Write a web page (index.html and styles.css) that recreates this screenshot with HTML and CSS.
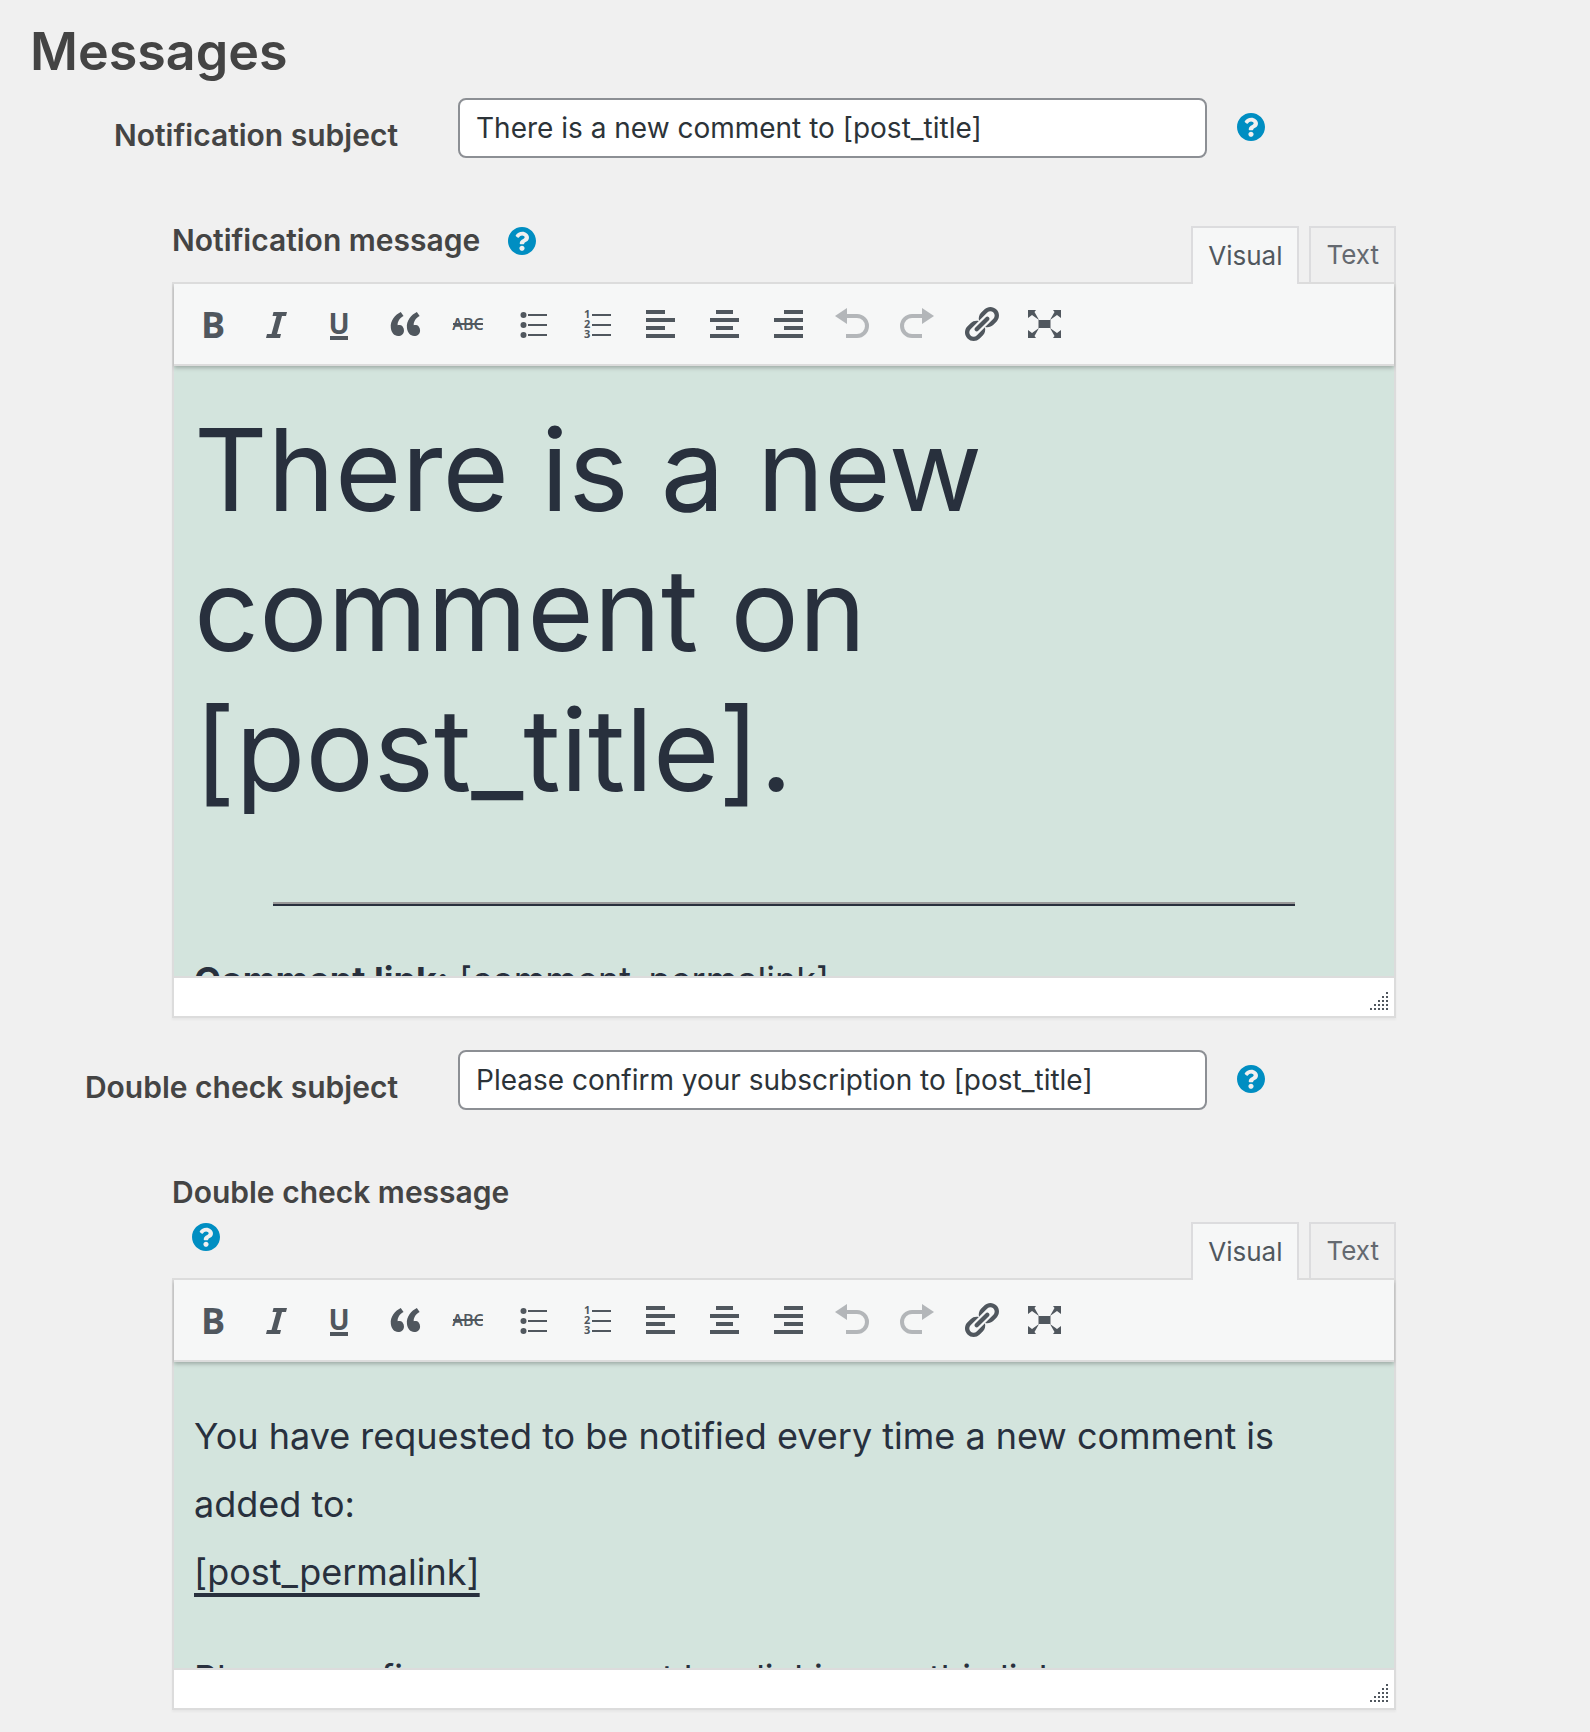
FILE: index.html
```html
<!DOCTYPE html>
<html lang="en">
<head>
    <meta charset="UTF-8">
    <meta name="viewport" content="width=device-width, initial-scale=1.0">
    <title>Messages</title>
    <link rel="stylesheet" href="styles.css">
</head>
<body>
    <!-- icon sprite -->
    <svg class="sprite" aria-hidden="true">
        <symbol id="i-help" viewBox="8 8 496 496"><path d="M504 256c0 136.997-111.043 248-248 248S8 392.997 8 256C8 119.083 119.043 8 256 8s248 111.083 248 248zM262.655 90c-54.497 0-89.255 22.957-116.549 63.758-3.536 5.286-2.353 12.415 2.715 16.258l34.699 26.31c5.205 3.947 12.621 3.008 16.665-2.122 17.864-22.658 30.113-35.797 57.303-35.797 20.429 0 45.698 13.148 45.698 32.958 0 14.976-12.363 22.667-32.534 33.976C247.128 238.528 216 254.941 216 296v4c0 6.627 5.373 12 12 12h56c6.627 0 12-5.373 12-12v-1.333c0-28.462 83.186-29.647 83.186-106.667 0-58.002-60.165-102-116.531-102zM256 338c-25.365 0-46 20.635-46 46 0 25.364 20.635 46 46 46s46-20.636 46-46c0-25.364-20.635-46-46-46z"/></symbol>
        <symbol id="i-bold" viewBox="0 0 40 40"><text class="t-bold" x="8" y="34">B</text></symbol>
        <symbol id="i-italic" viewBox="0 0 40 40"><path d="M16.5 8H30l-1 4h-4l-5 18h4l-1 4H9l1-4h4.500l5-18h-4z"/></symbol>
        <symbol id="i-underline" viewBox="0 0 40 40"><text class="t-under" x="18" y="30">U</text><path d="M9 32h18v4H9z"/></symbol>
        <symbol id="i-quote" viewBox="0 0 20 20"><path d="M9.490 13.220c0-.74-.2-1.380-.61-1.900-.62-.78-1.830-.88-2.530-.72-.29-1.650 1.110-3.750 2.920-4.650L7.880 4c-2.730 1.300-5.420 4.280-4.960 8.050C3.210 14.430 4.590 16 6.540 16c.85 0 1.560-.25 2.120-.75s.83-1.180.83-2.030zm8.050 0c0-.74-.2-1.380-.61-1.900-.63-.78-1.830-.88-2.530-.72-.29-1.650 1.110-3.750 2.920-4.650L15.930 4c-2.730 1.300-5.410 4.280-4.950 8.050.29 2.380 1.660 3.950 3.610 3.950.85 0 1.560-.25 2.120-.75s.83-1.180.83-2.030z"/></symbol>
        <symbol id="i-strike" viewBox="0 0 40 40"><text class="t-abc" x="19" y="26">ABC</text><path d="M4 19h30v2H4z"/></symbol>
        <symbol id="i-ul" viewBox="0 0 40 40"><circle cx="10.500" cy="11" r="3"/><circle cx="10.500" cy="21" r="3"/><circle cx="10.500" cy="31" r="3"/><path d="M15 10h19v2H15zM15 20h19v2H15zM15 30h19v2H15z"/></symbol>
        <symbol id="i-ol" viewBox="0 0 40 40"><text class="t-num" x="7" y="14">1</text><text class="t-num" x="7" y="24">2</text><text class="t-num" x="7" y="34">3</text><path d="M15 10h19v2H15zM15 20h19v2H15zM15 30h19v2H15z"/></symbol>
        <symbol id="i-left" viewBox="0 0 40 40"><path d="M5 6h19v4H5zM5 14h29v4H5zM5 22h19v4H5zM5 30h29v4H5z"/></symbol>
        <symbol id="i-center" viewBox="0 0 40 40"><path d="M11 6h17v4H11zM5 14h29v4H5zM11 22h17v4H11zM5 30h29v4H5z"/></symbol>
        <symbol id="i-right" viewBox="0 0 40 40"><path d="M15 6h19v4H15zM5 14h29v4H5zM15 22h19v4H15zM5 30h29v4H5z"/></symbol>
        <symbol id="i-undo" viewBox="0 0 40 40"><path d="M2 12L14 4v16z"/><path class="line" d="M13 12h11a10 10 0 0 1 0 20H13"/></symbol>
        <symbol id="i-redo" viewBox="0 0 40 40"><path d="M37 12L25 4v16z"/><path class="line" d="M26 12H15a10 10 0 0 0 0 20h10"/></symbol>
        <symbol id="i-link" viewBox="0 0 20 20"><path d="M17.740 2.760c1.680 1.690 1.680 4.410 0 6.100l-1.530 1.520c-1.120 1.120-2.700 1.470-4.140 1.090l2.620-2.610.76-.77.76-.76c.84-.84.84-2.200 0-3.040-.84-.85-2.200-.85-3.040 0l-.77.76-3.380 3.380c-.37-1.440-.02-3.020 1.100-4.140l1.520-1.530c1.690-1.680 4.420-1.680 6.100 0zM8.590 13.430l5.340-5.340c.42-.42.42-1.100 0-1.520-.44-.43-1.130-.39-1.530 0l-5.330 5.340c-.42.42-.42 1.100 0 1.520.44.43 1.130.39 1.520 0zm-.76 2.290l4.140-4.150c.38 1.440.03 3.020-1.090 4.140l-1.520 1.530c-1.690 1.680-4.410 1.680-6.100 0-1.680-1.680-1.680-4.420 0-6.100l1.530-1.520c1.120-1.120 2.700-1.470 4.140-1.100l-4.140 4.150c-.85.84-.85 2.200 0 3.050.84.84 2.200.84 3.040 0z"/></symbol>
        <symbol id="i-full" viewBox="0 0 40 40"><path d="M13.500 16h12v8h-12zM3 6h8L9.500 8l4.500 8-7-5-4 3zM36 6h-8l1.500 2-4.500 8 7-5 4 3zM3 34h8l-1.500-2 4.500-8-7 5-4-3zM36 34h-8l1.500-2-4.500-8 7 5 4-3z"/></symbol>
        <symbol id="i-grip" viewBox="0 0 20 20"><path d="M17 1h2v2h-2zM13 5h2v2h-2zM17 5h2v2h-2zM9 9h2v2H9zM13 9h2v2h-2zM17 9h2v2h-2zM5 13h2v2H5zM9 13h2v2H9zM13 13h2v2h-2zM17 13h2v2h-2zM1 17h2v2H1zM5 17h2v2H5zM9 17h2v2H9zM13 17h2v2h-2zM17 17h2v2h-2z"/></symbol>
    </svg>

    <h1 class="title">Messages</h1>

    <form>
        <div class="row">
            <label class="row-label" for="notification-subject">Notification subject</label>
            <input class="row-input" id="notification-subject" type="text" value="There is a new comment to [post_title]">
            <button class="help row-help" type="button" aria-label="Help"><svg><use href="#i-help"/></svg></button>
        </div>

        <section class="editor">
            <div class="editor-head">
                <div class="editor-label"><span id="notification-label">Notification message</span> <button class="help" type="button" aria-label="Help"><svg><use href="#i-help"/></svg></button></div>
                <div class="tabs"><button class="tab active" type="button">Visual</button><button class="tab" type="button">Text</button></div>
            </div>
            <div class="editor-box">
                <div class="toolbar">
                    <button class="tool" type="button" aria-label="Bold"><svg><use href="#i-bold"/></svg></button>
                    <button class="tool" type="button" aria-label="Italic"><svg><use href="#i-italic"/></svg></button>
                    <button class="tool" type="button" aria-label="Underline"><svg><use href="#i-underline"/></svg></button>
                    <button class="tool" type="button" aria-label="Blockquote"><svg><use href="#i-quote"/></svg></button>
                    <button class="tool" type="button" aria-label="Strikethrough"><svg><use href="#i-strike"/></svg></button>
                    <button class="tool" type="button" aria-label="Bulleted list"><svg><use href="#i-ul"/></svg></button>
                    <button class="tool" type="button" aria-label="Numbered list"><svg><use href="#i-ol"/></svg></button>
                    <button class="tool" type="button" aria-label="Align left"><svg><use href="#i-left"/></svg></button>
                    <button class="tool" type="button" aria-label="Align center"><svg><use href="#i-center"/></svg></button>
                    <button class="tool" type="button" aria-label="Align right"><svg><use href="#i-right"/></svg></button>
                    <button class="tool" type="button" aria-label="Undo" disabled><svg><use href="#i-undo"/></svg></button>
                    <button class="tool" type="button" aria-label="Redo" disabled><svg><use href="#i-redo"/></svg></button>
                    <button class="tool" type="button" aria-label="Insert link"><svg><use href="#i-link"/></svg></button>
                    <button class="tool" type="button" aria-label="Fullscreen"><svg><use href="#i-full"/></svg></button>
                </div>
                <div class="content content-tall" contenteditable="true" role="textbox" aria-multiline="true" aria-labelledby="notification-label" spellcheck="false">
                    <h2>There is a new comment on [post_title].</h2>
                    <hr>
                    <p><strong>Comment link:</strong> [comment_permalink]</p>
                </div>
                <div class="statusbar"><svg><use href="#i-grip"/></svg></div>
            </div>
        </section>

        <div class="row">
            <label class="row-label" for="double-check-subject">Double check subject</label>
            <input class="row-input" id="double-check-subject" type="text" value="Please confirm your subscription to [post_title]">
            <button class="help row-help" type="button" aria-label="Help"><svg><use href="#i-help"/></svg></button>
        </div>

        <section class="editor">
            <div class="editor-head">
                <div class="editor-label"><span id="double-check-label">Double check message</span> <button class="help" type="button" aria-label="Help"><svg><use href="#i-help"/></svg></button></div>
                <div class="tabs"><button class="tab active" type="button">Visual</button><button class="tab" type="button">Text</button></div>
            </div>
            <div class="editor-box">
                <div class="toolbar">
                    <button class="tool" type="button" aria-label="Bold"><svg><use href="#i-bold"/></svg></button>
                    <button class="tool" type="button" aria-label="Italic"><svg><use href="#i-italic"/></svg></button>
                    <button class="tool" type="button" aria-label="Underline"><svg><use href="#i-underline"/></svg></button>
                    <button class="tool" type="button" aria-label="Blockquote"><svg><use href="#i-quote"/></svg></button>
                    <button class="tool" type="button" aria-label="Strikethrough"><svg><use href="#i-strike"/></svg></button>
                    <button class="tool" type="button" aria-label="Bulleted list"><svg><use href="#i-ul"/></svg></button>
                    <button class="tool" type="button" aria-label="Numbered list"><svg><use href="#i-ol"/></svg></button>
                    <button class="tool" type="button" aria-label="Align left"><svg><use href="#i-left"/></svg></button>
                    <button class="tool" type="button" aria-label="Align center"><svg><use href="#i-center"/></svg></button>
                    <button class="tool" type="button" aria-label="Align right"><svg><use href="#i-right"/></svg></button>
                    <button class="tool" type="button" aria-label="Undo" disabled><svg><use href="#i-undo"/></svg></button>
                    <button class="tool" type="button" aria-label="Redo" disabled><svg><use href="#i-redo"/></svg></button>
                    <button class="tool" type="button" aria-label="Insert link"><svg><use href="#i-link"/></svg></button>
                    <button class="tool" type="button" aria-label="Fullscreen"><svg><use href="#i-full"/></svg></button>
                </div>
                <div class="content content-short" contenteditable="true" role="textbox" aria-multiline="true" aria-labelledby="double-check-label" spellcheck="false">
                    <p>You have requested to be notified every time a new comment is added to:<br><a href="#">[post_permalink]</a></p>
                    <p>Please confirm your request by clicking on this link:</p>
                </div>
                <div class="statusbar"><svg><use href="#i-grip"/></svg></div>
            </div>
        </section>
    </form>
</body>
</html>
```

FILE: styles.css
```css
*{margin:0;padding:0;box-sizing:border-box}
body{background:#f0f0f0;color:#444;font-family:Inter,"Liberation Sans",sans-serif;font-size:28px;line-height:44px;padding-bottom:20px}
button,input{font:inherit;color:inherit}
button{background:none;border:none;cursor:pointer}
svg{display:block;fill:currentColor}
.sprite{display:none}

.title{font-size:52px;line-height:64px;font-weight:600;padding:20px 30px 14px}

/* subject rows */
.row{display:flex;align-items:flex-start;padding-right:325px;margin-bottom:60px}
.row-label{width:398px;margin-right:60px;padding-top:15px;text-align:right;font-size:30px;font-weight:600}
.row-input{flex:1;min-width:0;height:60px;padding:0 16px;background:#fff;border:2px solid #8c8f94;border-radius:8px;color:#2c3338}
.help{display:inline-block;width:28px;height:28px;margin:0 0 4px 20px;vertical-align:middle;color:#008ec2}
.help svg{width:28px;height:28px}
.row-help{margin:15px 0 0 30px}

/* editors */
.editor{margin:0 194px 32px 172px}
.editor-head{display:flex;justify-content:space-between;align-items:flex-end}
.editor-label{width:370px;padding-bottom:20px;font-size:30px;font-weight:600}
.tabs{display:flex;gap:10px}
.tab{height:56px;padding:0 15px;border:2px solid #dcdcde;border-bottom:none;background:#efefef;color:#646970;font-size:26px}
.tab.active{position:relative;height:58px;margin-bottom:-2px;background:#f6f7f7;color:#50575e;z-index:1}
.editor-box{border:2px solid #dcdcdc;box-shadow:0 2px 2px rgba(0,0,0,.04)}
.toolbar{display:flex;flex-wrap:wrap;position:relative;padding:8px 7px;background:#f6f7f7;border-bottom:2px solid #dcdcdc;box-shadow:0 2px 4px rgba(0,0,0,.25);clip-path:inset(0 -2px -8px)}
.tool{width:64px;height:64px;padding:12px;color:#50575e}
.tool svg{width:40px;height:40px}
.tool:disabled{opacity:.4;cursor:default}
.line{fill:none;stroke:currentColor;stroke-width:4}
.t-bold{font:700 36px "Open Sans",sans-serif}
.t-under{font:700 28px "Open Sans",sans-serif;text-anchor:middle}
.t-abc{font:600 16px "Open Sans",sans-serif;text-anchor:middle}
.t-num{font:700 11px "Open Sans",sans-serif}

.content{overflow:hidden;padding:0 20px;background:#d3e4dd;color:#28303d;font-size:36px;line-height:68px;outline:none}
.content-tall{height:610px;padding-top:34px}
.content-short{height:306px;padding-top:40px}
.content h2{font-size:114px;line-height:140px;font-weight:400}
.content hr{height:4px;margin:82px 79px 40px;border:none;border-top:2px solid #999;background:#28303d}
.content p{margin-bottom:38px}
.content a{color:inherit;text-decoration:underline;text-decoration-thickness:4px;text-underline-offset:8px}
.statusbar{display:flex;justify-content:flex-end;align-items:flex-end;height:40px;padding:0 5px 5px;background:#fff;border-top:2px solid #dcdcdc;color:#50575e}
.statusbar svg{width:20px;height:20px}
```
